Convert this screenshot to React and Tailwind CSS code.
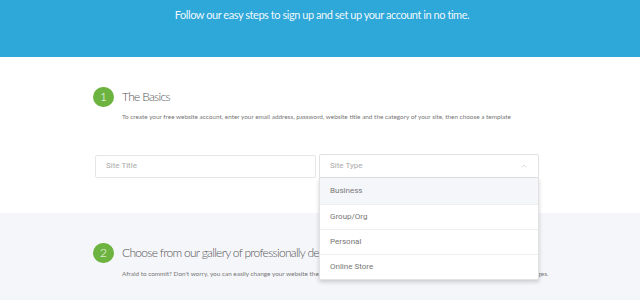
import { ChevronUp } from "lucide-react";

const options = ["Business", "Group/Org", "Personal", "Online Store"];

function StepBadge({ n }) {
  return (
    <div className="flex h-[20px] w-[21px] shrink-0 items-center justify-center rounded-full bg-[#6cb33f] text-[12px] font-light text-white">
      {n}
    </div>
  );
}

export default function App() {
  return (
    <div className="h-[300px] w-[640px] overflow-hidden bg-[#f5f6fa] font-['Lato',sans-serif]">
      {/* Header bleu */}
      <header className="flex h-[57px] justify-center bg-[#2ea7d9] pt-[7px]">
        <p className="ml-[4px] text-[11px] leading-[16px] tracking-[-0.45px] text-white/95">
          Follow our easy steps to sign up and set up your account in no time.
        </p>
      </header>

      {/* Paso 1 */}
      <section className="h-[156px] bg-white pl-[93px] pt-[30px]">
        <div className="flex items-center gap-[8px]">
          <StepBadge n={1} />
          <h2 className="text-[12px] font-light tracking-[-0.7px] text-[#555]">
            The Basics
          </h2>
        </div>
        <p className="ml-[29px] mt-[5px] text-[6.4px] text-[#777]">
          To create your free website account, enter your email address,
          password, website title and the category of your site, then choose a
          template
        </p>

        <div className="relative ml-[2px] mt-[33px] flex gap-[3px] font-['Roboto',sans-serif]">
          <div className="flex h-[23px] w-[221px] items-center rounded-[2px] border border-[#e6e6e6] px-[10px] text-[8px] text-[#aaa]">
            Site Title
          </div>
          <div className="relative -mt-px w-[220px]">
            <div className="flex h-[24px] items-center justify-between rounded-t-[2px] border border-[#e2e2e2] px-[10px] text-[8px] text-[#aaa]">
              <span>Site Type</span>
              <ChevronUp size={8} strokeWidth={1.5} className="text-[#bbb]" />
            </div>
            <ul className="absolute left-0 top-[24px] z-10 w-[220px] border-x border-b border-[#e2e2e2] bg-white shadow-[0_2px_4px_rgba(0,0,0,0.18)]">
              {options.map((o, i) => (
                <li
                  key={o}
                  className={`flex h-[25px] items-center px-[10px] text-[8px] text-[#777] ${
                    i === 0 ? "h-[26px] bg-[#f5f6fa]" : "border-t border-[#eee]"
                  }`}
                >
                  {o}
                </li>
              ))}
            </ul>
          </div>
        </div>
      </section>

      {/* Paso 2 */}
      <section className="pl-[93px] pt-[30px]">
        <div className="flex items-center gap-[8px]">
          <StepBadge n={2} />
          <h2 className="whitespace-nowrap text-[12px] font-light tracking-[-0.7px] text-[#555]">
            Choose from our gallery of professionally designed templates
          </h2>
        </div>
        <p className="ml-[29px] mt-[6px] whitespace-nowrap text-[6.4px] text-[#777]">
          Afraid to commit? Don't worry, you can easily change your website
          theme at any time later without losing any of your text, content,
          images or web pages.
        </p>
      </section>
    </div>
  );
}
